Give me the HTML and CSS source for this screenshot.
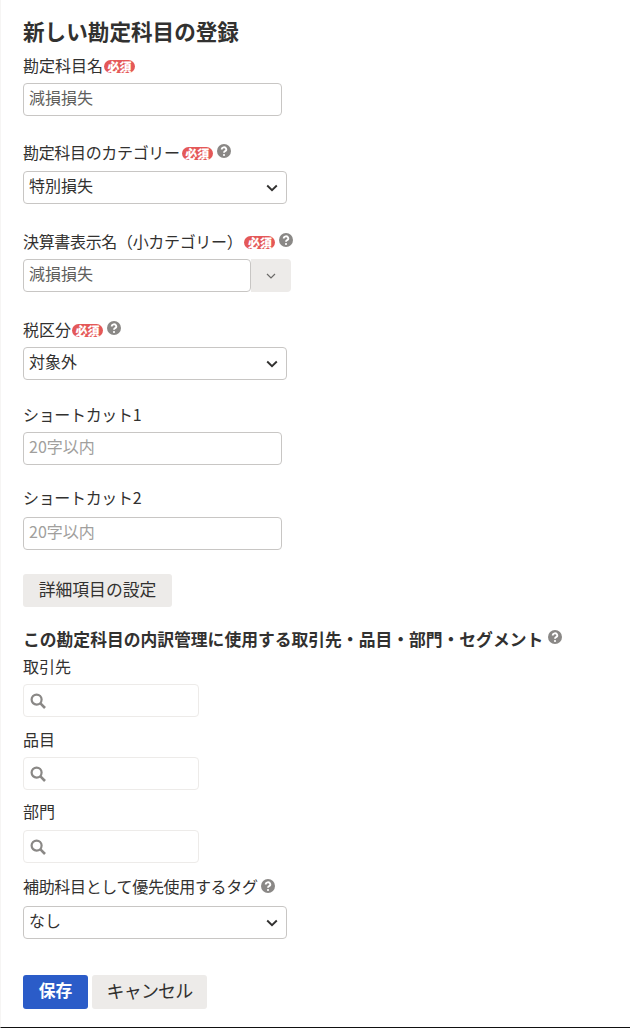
FILE: index.html
```html
<!DOCTYPE html>
<html lang="ja">
<head>
<meta charset="utf-8">
<title>新しい勘定科目の登録</title>
<link rel="stylesheet" href="styles.css">
</head>
<body>
<main class="page">
  <h1 class="title">新しい勘定科目の登録</h1>

  <section class="field f-name">
    <label class="label">勘定科目名<span class="badge">必須</span></label>
    <input class="input" value="減損損失">
  </section>

  <section class="field f-cat">
    <label class="label kana">勘定科目のカテゴリー<span class="badge gap">必須</span>
      <svg class="help" viewBox="0 0 16 16"><circle cx="8" cy="8" r="8" fill="#8a8886"/><path d="M5.4 6.2a2.6 2.4 0 1 1 3.9 2c-.9.5-1.3.8-1.3 1.8" fill="none" stroke="#fff" stroke-width="2.1"/><circle cx="8" cy="12.6" r="1.25" fill="#fff"/></svg>
    </label>
    <div class="select-wrap">
      <select class="select"><option>特別損失</option></select>
      <svg class="chev" viewBox="0 0 12 8"><path d="M1.2 1.5 6 6.2l4.8-4.7" fill="none" stroke="#323130" stroke-width="1.9"/></svg>
    </div>
  </section>

  <section class="field f-small">
    <label class="label kana">決算書表示名（小カテゴリー）<span class="badge wide">必須</span>
      <svg class="help" viewBox="0 0 16 16"><circle cx="8" cy="8" r="8" fill="#8a8886"/><path d="M5.4 6.2a2.6 2.4 0 1 1 3.9 2c-.9.5-1.3.8-1.3 1.8" fill="none" stroke="#fff" stroke-width="2.1"/><circle cx="8" cy="12.6" r="1.25" fill="#fff"/></svg>
    </label>
    <div class="combo">
      <input class="input combo-input" value="減損損失">
      <button class="combo-btn" type="button"><svg class="chev-sm" viewBox="0 0 10 6"><path d="M1 1l4 4 4-4" fill="none" stroke="#6b6a68" stroke-width="1.2"/></svg></button>
    </div>
  </section>

  <section class="field f-tax">
    <label class="label">税区分<span class="badge">必須</span>
      <svg class="help" viewBox="0 0 16 16"><circle cx="8" cy="8" r="8" fill="#8a8886"/><path d="M5.4 6.2a2.6 2.4 0 1 1 3.9 2c-.9.5-1.3.8-1.3 1.8" fill="none" stroke="#fff" stroke-width="2.1"/><circle cx="8" cy="12.6" r="1.25" fill="#fff"/></svg>
    </label>
    <div class="select-wrap">
      <select class="select"><option>対象外</option></select>
      <svg class="chev" viewBox="0 0 12 8"><path d="M1.2 1.5 6 6.2l4.8-4.7" fill="none" stroke="#323130" stroke-width="1.9"/></svg>
    </div>
  </section>

  <section class="field f-s1">
    <label class="label kana">ショートカット1</label>
    <input class="input" placeholder="20字以内">
  </section>

  <section class="field f-s2">
    <label class="label kana">ショートカット2</label>
    <input class="input" placeholder="20字以内">
  </section>

  <button class="btn detail" type="button">詳細項目の設定</button>

  <h2 class="subtitle">この勘定科目の内訳管理に使用する取引先・品目・部門・セグメント
    <svg class="help" viewBox="0 0 16 16"><circle cx="8" cy="8" r="8" fill="#8a8886"/><path d="M5.4 6.2a2.6 2.4 0 1 1 3.9 2c-.9.5-1.3.8-1.3 1.8" fill="none" stroke="#fff" stroke-width="2.1"/><circle cx="8" cy="12.6" r="1.25" fill="#fff"/></svg>
  </h2>

  <section class="search-field s-a">
    <label class="label">取引先</label>
    <div class="search"><svg class="mag" viewBox="0 0 16 16"><circle cx="6.6" cy="6.6" r="5" fill="none" stroke="#8a8886" stroke-width="2.2"/><path d="M10.2 10.2l4.8 4.8" stroke="#8a8886" stroke-width="2.6"/></svg></div>
  </section>
  <section class="search-field s-b">
    <label class="label">品目</label>
    <div class="search"><svg class="mag" viewBox="0 0 16 16"><circle cx="6.6" cy="6.6" r="5" fill="none" stroke="#8a8886" stroke-width="2.2"/><path d="M10.2 10.2l4.8 4.8" stroke="#8a8886" stroke-width="2.6"/></svg></div>
  </section>
  <section class="search-field s-c">
    <label class="label">部門</label>
    <div class="search"><svg class="mag" viewBox="0 0 16 16"><circle cx="6.6" cy="6.6" r="5" fill="none" stroke="#8a8886" stroke-width="2.2"/><path d="M10.2 10.2l4.8 4.8" stroke="#8a8886" stroke-width="2.6"/></svg></div>
  </section>

  <section class="field f-tag">
    <label class="label kana">補助科目として優先使用するタグ
      <svg class="help small" viewBox="0 0 16 16"><circle cx="8" cy="8" r="8" fill="#8a8886"/><path d="M5.4 6.2a2.6 2.4 0 1 1 3.9 2c-.9.5-1.3.8-1.3 1.8" fill="none" stroke="#fff" stroke-width="2.1"/><circle cx="8" cy="12.6" r="1.25" fill="#fff"/></svg>
    </label>
    <div class="select-wrap">
      <select class="select"><option>なし</option></select>
      <svg class="chev" viewBox="0 0 12 8"><path d="M1.2 1.5 6 6.2l4.8-4.7" fill="none" stroke="#323130" stroke-width="1.9"/></svg>
    </div>
  </section>

  <div class="actions">
    <button class="btn save" type="button">保存</button>
    <button class="btn cancel" type="button">キャンセル</button>
  </div>
</main>
</body>
</html>
```

FILE: styles.css
```css
* { box-sizing: border-box; }
html, body { margin: 0; padding: 0; background: #fff; }
body {
  width: 630px;
  height: 1028px;
  overflow: hidden;
  font-family: "Noto Sans CJK JP", "Noto Sans", sans-serif;
  color: #323130;
}
.page {
  height: 1028px;
  padding: 18px 0 0 22px;
  border-left: 1px solid #f6f5f4;
  border-bottom: 1px solid #111;
}
.title {
  margin: 0;
  font-size: 21.6px;
  line-height: 25px;
  font-weight: 700;
}
.label {
  display: flex;
  align-items: center;
  font-size: 16px;
  line-height: 22px;
  height: 22px;
  white-space: nowrap;
}
.label.kana { letter-spacing: -0.33px; }
.badge {
  display: inline-block;
  width: 31px;
  height: 13px;
  margin-left: 1px;
  margin-top: 2px;
  border-radius: 7px;
  background: #e45858;
  color: #fff;
  font-size: 12px;
  line-height: 13px;
  font-weight: 900;
  letter-spacing: 0;
  text-align: center;
}
.badge.gap { margin-left: 2px; }
.badge.wide { margin-left: 2px; }
.help { width: 14px; height: 14px; margin-left: 4px; margin-top: -3px; flex: none; }
.help.small { margin-left: 3px; margin-top: 0; }
.input, .select {
  display: block;
  height: 33px;
  padding: 0 5px 6px;
  border: 1px solid #c8c6c4;
  border-radius: 4px;
  background: #fff;
  font-family: inherit;
  font-size: 16px;
  color: #323130;
  outline: none;
}
.input { width: 259px; color: #605e5c; }
.input::placeholder { color: #a19f9d; opacity: 1; }
.select-wrap { position: relative; width: 264px; }
.select { width: 264px; appearance: none; -webkit-appearance: none; }
.chev { position: absolute; right: 9px; top: 13px; width: 12px; height: 8px; pointer-events: none; }
.field { margin: 0; }
.f-name { margin-top: 11px; }
.f-name .label { margin-bottom: 7px; }
.f-cat { margin-top: 25px; }
.f-cat .label { margin-bottom: 8px; }
.f-small { margin-top: 26px; }
.f-small .label { margin-bottom: 7px; }
.f-tax { margin-top: 25px; }
.f-tax .label { margin-bottom: 7px; }
.f-s1 { margin-top: 23px; }
.f-s1 .label { margin-bottom: 7px; }
.f-s2 { margin-top: 21px; }
.f-s2 .label { margin-bottom: 9px; }
.combo { display: flex; width: 268px; height: 34px; }
.combo-input { width: 228px; height: 33px; }
.combo-btn {
  width: 40px;
  height: 33px;
  padding: 0;
  border: 0;
  border-radius: 0 4px 4px 0;
  background: #edebe9;
  display: flex;
  align-items: center;
  justify-content: center;
}
.chev-sm { width: 10px; height: 6px; }
.btn {
  display: block;
  height: 33px;
  padding: 0 0 4px;
  border: 0;
  border-radius: 3px;
  font-family: inherit;
  font-size: 16.8px;
  background: #edebe9;
  color: #323130;
}
.detail { width: 149px; margin-top: 24px; }
.subtitle {
  display: flex;
  align-items: center;
  margin: 21px 0 0;
  font-size: 16.8px;
  line-height: 22px;
  font-weight: 700;
  white-space: nowrap;
}
.subtitle .help { margin-left: 5px; margin-top: -4px; }
.s-a { margin-top: 5px; }
.s-a .label { margin-bottom: 7px; }
.s-b { margin-top: 11px; }
.s-b .label { margin-bottom: 7px; }
.s-c { margin-top: 10px; }
.s-c .label { margin-bottom: 8px; }
.search {
  display: flex;
  align-items: center;
  width: 176px;
  height: 33px;
  padding-left: 6px;
  border: 1px solid #edebe9;
  border-radius: 4px;
  background: #fff;
}
.mag { width: 16px; height: 16px; }
.f-tag { margin-top: 12px; }
.f-tag .label { margin-bottom: 9px; }
.actions { display: flex; gap: 4px; margin-top: 36px; }
.save {
  width: 65px;
  height: 34px;
  background: #2b5cc8;
  color: #fff;
  font-weight: 700;
}
.cancel { width: 115px; height: 34px; font-size: 18px; letter-spacing: -0.8px; }
```
